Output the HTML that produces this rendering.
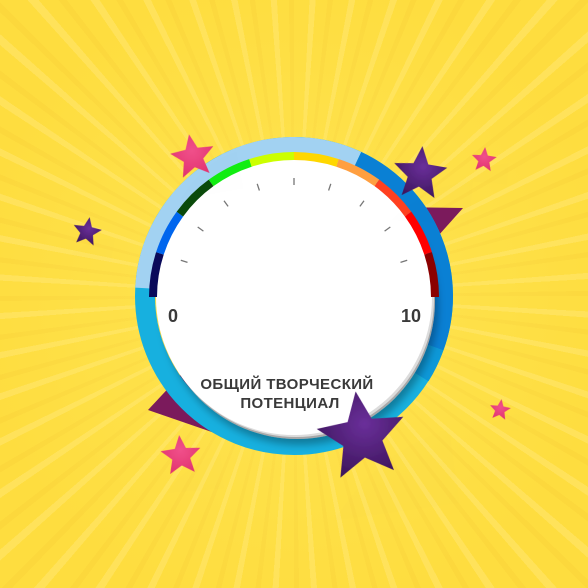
<!DOCTYPE html>
<html><head><meta charset="utf-8"><style>
html,body{margin:0;padding:0}
body{width:588px;height:588px;overflow:hidden;position:relative;
background:
radial-gradient(circle at 294px 296px, rgba(255,238,110,0.45) 0, rgba(255,230,80,0) 320px),
repeating-conic-gradient(from 0deg at 294px 296px, #fedd3f 0deg 3deg, #ffe25a 3deg 4.2deg, #fedd3f 4.2deg 6.5deg, #fcd83c 6.5deg 7.5deg);
font-family:"Liberation Sans",sans-serif}
svg{position:absolute;left:0;top:0}
</style></head><body>
<svg width="588" height="588" viewBox="0 0 588 588">
<defs>
<polygon id="st" points="0,-1 0.265,-0.364 0.951,-0.309 0.428,0.139 0.588,0.809 0,0.45 -0.588,0.809 -0.428,0.139 -0.951,-0.309 -0.265,-0.364"/>
<radialGradient id="pg" cx="0.55" cy="0.4" r="0.7"><stop offset="0" stop-color="#6a2f9a"/><stop offset="1" stop-color="#3a1458"/></radialGradient>
<radialGradient id="pk" cx="0.5" cy="0.4" r="0.7"><stop offset="0" stop-color="#f0508a"/><stop offset="1" stop-color="#e0306c"/></radialGradient>
<filter id="sh" x="-30%" y="-30%" width="160%" height="160%"><feDropShadow dx="3" dy="6" stdDeviation="4" flood-color="#000" flood-opacity="0.3"/></filter>
<filter id="ss" x="-50%" y="-50%" width="200%" height="200%"><feDropShadow dx="3" dy="5" stdDeviation="3" flood-color="#7a5a00" flood-opacity="0.35"/></filter>
</defs>
<polygon points="395,207 463,208 438,236" fill="#7b1a5c"/>
<polygon points="148,410 190,365 235,440" fill="#7b1a5c"/>
<circle cx="294" cy="296" r="149" fill="none" stroke="#17b0df" stroke-width="20"/>
<path d="M145.2,288.2 A149,149 0 0 1 357,161" fill="none" stroke="#a2d2f2" stroke-width="20"/>
<path d="M357,161 A149,149 0 0 1 434,347" fill="none" stroke="#0a80d4" stroke-width="20"/>
<path d="M434,347 A149,149 0 0 1 420,376" fill="none" stroke="#0d98d8" stroke-width="20"/>
<circle cx="297" cy="301" r="138" fill="#a8a8a8" filter="url(#sh)"/>
<circle cx="296" cy="299" r="138" fill="#dcdcdc"/>
<circle cx="294" cy="297" r="138" fill="#fff"/>
<g fill="none" stroke-width="8">
<path d="M153,297 A141,141 0 0 1 159.9,253.4" stroke="#0a0a5a"/>
<path d="M159.9,253.4 A141,141 0 0 1 179.9,214.1" stroke="#0066ee"/>
<path d="M179.9,214.1 A141,141 0 0 1 211.1,182.9" stroke="#0a4a0a"/>
<path d="M211.1,182.9 A141,141 0 0 1 250.4,162.9" stroke="#11ee11"/>
<path d="M250.4,162.9 A141,141 0 0 1 294,156" stroke="#ccff00"/>
<path d="M294,156 A141,141 0 0 1 337.6,162.9" stroke="#ffd700"/>
<path d="M337.6,162.9 A141,141 0 0 1 376.9,182.9" stroke="#ff9f40"/>
<path d="M376.9,182.9 A141,141 0 0 1 408.1,214.1" stroke="#ff4020"/>
<path d="M408.1,214.1 A141,141 0 0 1 428.1,253.4" stroke="#ff0000"/>
<path d="M428.1,253.4 A141,141 0 0 1 435,297" stroke="#8b0000"/>
</g>
<g stroke="#777" stroke-width="1.3">
<line x1="187.5" y1="262.4" x2="180.8" y2="260.2"/>
<line x1="203.4" y1="231.1" x2="197.7" y2="227"/>
<line x1="228.1" y1="206.4" x2="224" y2="200.7"/>
<line x1="259.4" y1="190.5" x2="257.2" y2="183.8"/>
<line x1="294" y1="185" x2="294" y2="178"/>
<line x1="328.6" y1="190.5" x2="330.8" y2="183.8"/>
<line x1="359.9" y1="206.4" x2="364" y2="200.7"/>
<line x1="384.6" y1="231.1" x2="390.3" y2="227"/>
<line x1="400.5" y1="262.4" x2="407.2" y2="260.2"/>
</g>
<g font-family="Liberation Sans, sans-serif" font-weight="bold" fill="#3a3a3a">
<text x="173" y="322" font-size="18" text-anchor="middle">0</text>
<text x="411" y="322" font-size="18" text-anchor="middle">10</text>
<text x="287" y="389" font-size="15" letter-spacing="0.4" text-anchor="middle">ОБЩИЙ  ТВОРЧЕСКИЙ</text>
<text x="290" y="408" font-size="15" letter-spacing="0.4" text-anchor="middle">ПОТЕНЦИАЛ</text>
</g>
<use href="#st" transform="translate(362,437) rotate(-8) scale(46)" fill="url(#pg)" filter="url(#ss)"/>
<use href="#st" transform="translate(420,174) rotate(5) scale(28)" fill="url(#pg)" filter="url(#ss)"/>
<use href="#st" transform="translate(87,232) rotate(10) scale(15)" fill="url(#pg)" filter="url(#ss)"/>
<use href="#st" transform="translate(193,157) rotate(-10) scale(23)" fill="url(#pk)" filter="url(#ss)"/>
<use href="#st" transform="translate(484,160) rotate(5) scale(13)" fill="url(#pk)" filter="url(#ss)"/>
<use href="#st" transform="translate(181,456) rotate(-5) scale(21)" fill="url(#pk)" filter="url(#ss)"/>
<use href="#st" transform="translate(500,410) rotate(8) scale(11)" fill="url(#pk)" filter="url(#ss)"/>
</svg>
</body></html>
